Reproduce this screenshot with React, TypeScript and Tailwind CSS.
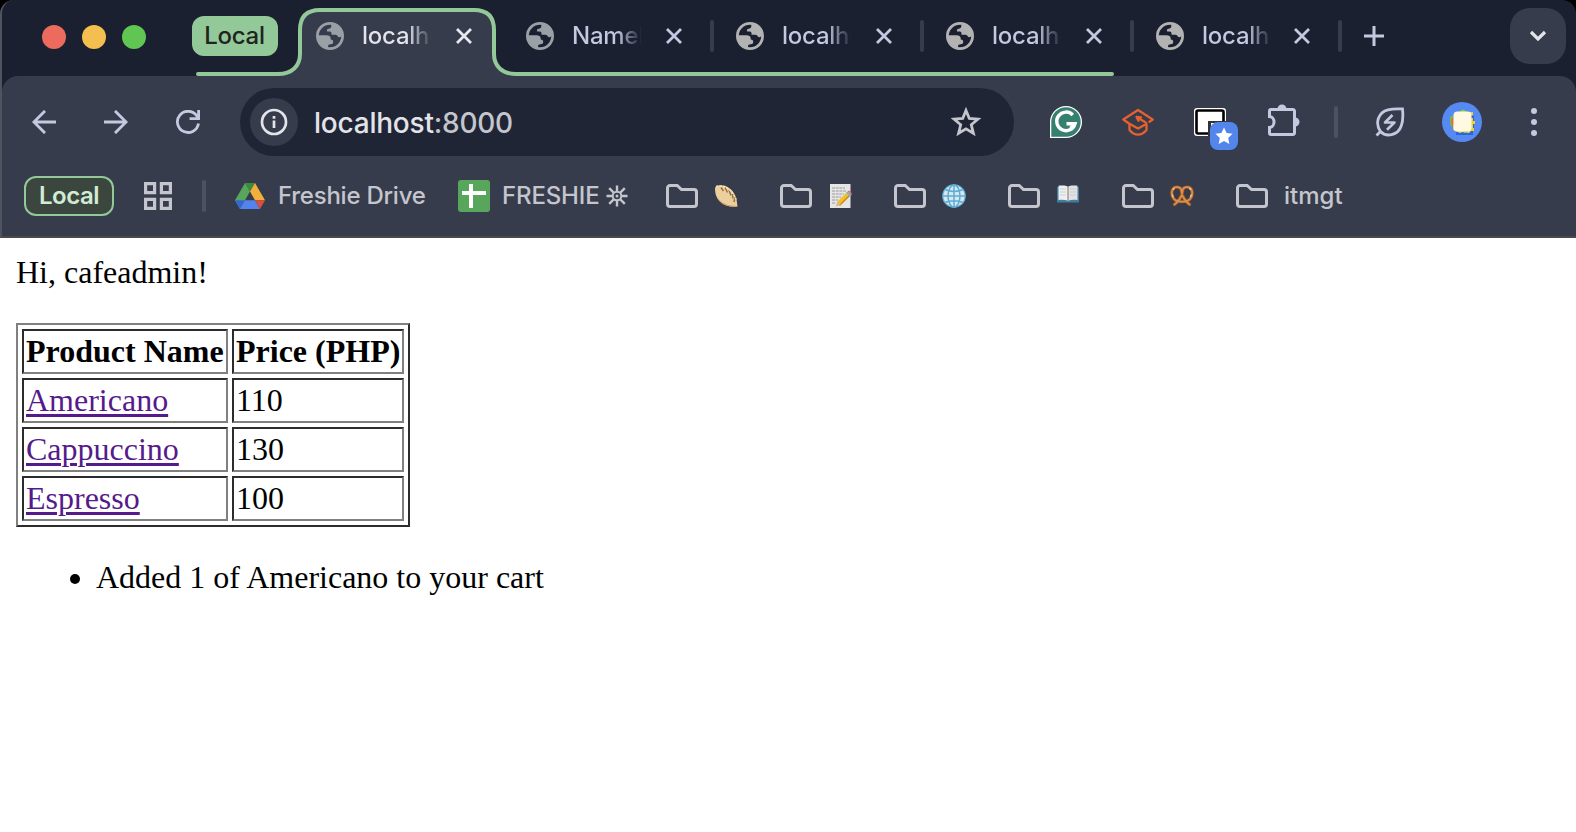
import React from "react";

function Globe({ className }: { className: string }) {
  return (
    <svg viewBox="0 0 28 28" className={"size-7 shrink-0 " + className}>
      <circle cx="14" cy="14" r="12.6" fill="none" stroke="currentColor" strokeWidth="2.8" />
      <path
        fill="currentColor"
        d="M15.300 2.200v2c0 1.500-1.200 2.200-2.600 2.500-1.700.3-2.200 1.300-1.500 2.700h2.500c1.200 0 1.800.9 1.800 2.100v1.300h4c1.300 0 1.900.8 2.300 1.700.8 1.200 2.500 1.100 3.600-.5l1-1.500C26.200 6 21 2.200 15.300 2.200z"
      />
      <path fill="currentColor" d="M2 13.200h8.500c2.500 0 4.200 1.100 4.200 3.100v1.300c1.500 0 2.500.8 2.500 2.300s-1 2.200-2.500 2.300c-1.800 0-2.700.8-2.700 2.200v2.200C6 26 1.500 20 2 13.200z" />
    </svg>
  );
}

function Close({ className }: { className: string }) {
  return (
    <svg viewBox="0 0 16 16" className={"size-4 shrink-0 " + className}>
      <path d="M1 1l14 14M15 1L1 15" stroke="currentColor" strokeWidth="2.800" fill="none" />
    </svg>
  );
}

const FADE = "bg-linear-to-r from-66% to-102% bg-clip-text text-transparent tracking-[-0.01em]";

function Tab({ title, first, last }: { title: string; first?: boolean; last?: boolean }) {
  return (
    <div className={"flex h-8 shrink-0 items-center " + (last ? "w-[208px]" : "w-[210px]")}>
      <Globe className={first ? "text-[#9aa0a6]" : "text-[#b3b3b3]"} />
      <span className={"ml-[18px] w-[69px] overflow-hidden whitespace-nowrap from-[#c3c9e0] to-[#1a202f] " + FADE}>{title}</span>
      <Close className={(last ? "ml-[23px]" : "ml-[25px]") + " text-[#c3c9e0]"} />
      <span className="ml-7 h-8 w-1 rounded-xs bg-[#363c4b]" />
    </div>
  );
}

function Folder({ children, className }: { children: React.ReactNode; className: string }) {
  return (
    <div className={"flex items-center " + className}>
      <svg viewBox="0 0 32 24" className="h-6 w-8 shrink-0">
        <path d="M4 1.500h7.200l4.300 4H28a2.500 2.500 0 0 1 2.500 2.500V20a2.500 2.500 0 0 1-2.500 2.500H4A2.500 2.500 0 0 1 1.500 20V4A2.500 2.500 0 0 1 4 1.500z" fill="none" stroke="#c5c6cd" strokeWidth="3" />
      </svg>
      {children}
    </div>
  );
}

function Dumpling() {
  return (
    <svg viewBox="0 0 24 24" className="ml-4 size-6">
      <path d="M1 4C2 1 10 0 15 4c5 3 6 8 7.500 11l1 7.500c-5 1-12 0-16.500-4S1 10 1 4z" fill="#ebd09d" />
      <path d="M2.500 11c2 6 8 9.500 14 10.500l6.500.5c-5 1.500-12 0-16-3.500-3-2-4-5-4.500-7.500z" fill="#cda061" />
      <path d="M7 3.500l2.500 3.500M11 3.500l2.500 5M15 6l2 5.500M18.500 9.500l.5 5M21 13.500l-1 4.500" stroke="#94703f" strokeWidth="1.500" fill="none" />
      <path d="M2 2.500c7-2 16 2 20 13" stroke="#f6e3ba" strokeWidth="1.500" fill="none" strokeDasharray="2.500 1" />
    </svg>
  );
}

function Memo() {
  return (
    <svg viewBox="0 0 22 24" className="ml-[18px] h-6 w-[22px]">
      <path d="M0 0h20.500v24H0z" fill="#e6e6e6" />
      <path d="M2 4h13M2 7h14M2 10h12M2 13h9M2 16h6M2 19h4" stroke="#9a9a9a" strokeWidth="1" strokeDasharray="3 .7" />
      <path d="M6 22.500l1.500-5L17 8l3.500 3.500-9.500 9z" fill="#f2c02c" />
      <path d="M9.500 21.500L20 11" stroke="#c98a17" strokeWidth="1.500" />
      <path d="M6 22.500l1.500-5 3.500 3z" fill="#d9b98a" />
      <path d="M16 9l1.500-1.500 4 3.500L20 12.500z" fill="#7db4cf" />
      <path d="M17.500 7.500c2-2 5 1 4 3.500z" fill="#e5696f" />
    </svg>
  );
}

function World() {
  return (
    <svg viewBox="0 0 24 24" className="ml-4 size-6">
      <circle cx="12" cy="12" r="11.800" fill="#62b4da" />
      <circle cx="12" cy="12" r="10.600" fill="#d7e6ef" />
      <path d="M12 .5v23M.5 12h23M3 5.500c5 2.500 13 2.500 18 0M3 18.500c5-2.500 13-2.500 18 0" stroke="#5cadd5" strokeWidth="1.500" fill="none" />
      <ellipse cx="12" cy="12" rx="6" ry="11" fill="none" stroke="#5cadd5" strokeWidth="1.500" />
    </svg>
  );
}

function Book() {
  return (
    <svg viewBox="0 0 22 18" className="mb-1 ml-[17px] h-[18px] w-[22px]">
      <path d="M0 2h22v15.500H0z" fill="#3f7ea0" />
      <path d="M1.500.8C5 .2 9 .2 11 1.800v14C8 14.500 5 14.500 1.500 15z" fill="#efefef" />
      <path d="M20.500.8C17 .2 13 .2 11 1.800v14c3-1.300 6-1.300 9.500-.8z" fill="#e2e2e2" />
      <path d="M11 1.500v15" stroke="#8b8b8b" strokeWidth="1.200" />
      <path d="M3 4h6M3 7h6M3 10h6M13 4h6M13 7h6M13 10h6" stroke="#cfcfcf" strokeWidth="1" />
    </svg>
  );
}

const PRETZEL = "M4.500 19.500C8 17 12.500 11 12.500 6.500 12.500 3 15 2 17.500 2 23 2.500 23.500 10 20 14 17 17.500 7 17.500 4 14 .5 10 1 2.500 6.500 2 9 2 11.500 3 11.500 6.500 11.500 11 16 17 19.500 19.500";

function Pretzel() {
  return (
    <svg viewBox="0 0 24 22" className="mb-px ml-4 h-[22px] w-6">
      <g fill="none" strokeLinecap="round" strokeLinejoin="round">
        <path d={PRETZEL} stroke="#a85f27" strokeWidth="3.200" />
        <path d={PRETZEL} stroke="#da9150" strokeWidth="1.500" />
        <path d="M3.500 4.500l.8-1M19.500 3.500l1 1M2.500 10l.6 1.500M20.500 11.500l.8-1.500" stroke="#f3d3a2" strokeWidth="1.200" />
      </g>
    </svg>
  );
}

function TabStrip() {
  return (
    <div className="relative flex h-[76px] w-full text-[24px]">
      <svg viewBox="0 0 1576 76" className="absolute inset-0 h-[76px] w-[1576px]">
        <path d="M278 76C292 76 300 66 300 54V30Q300 10 320 10H474Q494 10 494 30V54C494 66 502 76 516 76z" fill="#363c4b" />
        <path d="M198 74H278C292 74 300 66 300 54V30Q300 10 320 10H474Q494 10 494 30V54C494 66 502 74 516 74H1112" fill="none" stroke="#93c899" strokeWidth="4" strokeLinecap="round" />
      </svg>
      <div className="relative flex h-[72px] w-full items-center">
        <div className="mt-0.5 ml-[42px] flex gap-4">
          <span className="size-6 rounded-full bg-[#ed6a5e]" />
          <span className="size-6 rounded-full bg-[#f5bf4f]" />
          <span className="size-6 rounded-full bg-[#61c554]" />
        </div>
        <div className="ml-[46px] flex h-10 w-[86px] items-center justify-center rounded-xl bg-[#93c899] pr-px tracking-[-0.01em] text-[#1f2420]">Local</div>
        <div className="ml-[38px] flex w-[210px] shrink-0 items-center">
          <Globe className="text-[#9aa0a6]" />
          <span className={"ml-[18px] w-[69px] overflow-hidden whitespace-nowrap from-[#e3e3ea] to-[#363c4b] " + FADE}>localhost</span>
          <Close className="ml-[25px] text-[#e8e8ef]" />
        </div>
        <Tab title="NameError" first />
        <Tab title="localhost" />
        <Tab title="localhost" />
        <Tab title="localhost" last />
        <svg viewBox="0 0 20 20" className="size-5 shrink-0">
          <path d="M10 0v20M0 10h20" stroke="#c3c9e0" strokeWidth="3" />
        </svg>
        <div className="mr-2.5 ml-auto flex size-14 items-center justify-center rounded-[20px] bg-[#363c4b]">
          <svg viewBox="0 0 18 12" className="h-3 w-[18px]">
            <path d="M2 2l7 7 7-7" fill="none" stroke="#e3e3ea" strokeWidth="3.200" />
          </svg>
        </div>
      </div>
    </div>
  );
}

function Toolbar() {
  return (
    <div className="flex h-[92px] items-center text-[#c3c9e0]">
      <svg viewBox="0 0 24 24" className="ml-8 size-6">
        <path d="M24 12H2M13 .9L1.900 12 13 23.100" fill="none" stroke="currentColor" strokeWidth="2.800" />
      </svg>
      <svg viewBox="0 0 24 24" className="ml-12 size-6">
        <path d="M0 12h22M11 .9L22.100 12 11 23.100" fill="none" stroke="currentColor" strokeWidth="2.800" />
      </svg>
      <svg viewBox="0 0 24 24" className="ml-12 size-6">
        <path d="M22.500 13.500A10.600 10.600 0 1 1 20.500 5.500l2 3M22.600 0v8.700h-9" fill="none" stroke="currentColor" strokeWidth="2.800" />
      </svg>
      <div className="ml-10 flex h-[68px] w-[774px] items-center rounded-full bg-[#1f2534]">
        <span className="ml-2.5 flex size-12 items-center justify-center rounded-full bg-[#363c4b]">
          <svg viewBox="0 0 28 28" className="size-7">
            <circle cx="14" cy="14" r="12" fill="none" stroke="#e3e3ea" strokeWidth="2.700" />
            <path d="M14 12.600v7.400M14 8v2.800" stroke="#e3e3ea" strokeWidth="2.700" />
          </svg>
        </span>
        <span className="mt-px ml-4 text-[28px] tracking-[-0.008em] text-[#e3e3ea]">
          localhost<span className="text-[#c5c6cd]">:8000</span>
        </span>
        <svg viewBox="0 0 32 32" className="mr-8 ml-auto size-8">
          <path d="M16 4.500l3.300 8 8.600.7-6.600 5.600 2.100 8.500L16 22.800l-7.400 4.500 2.100-8.500-6.600-5.600 8.600-.7z" fill="none" stroke="#c5c6cd" strokeWidth="2.800" />
        </svg>
      </div>
      <svg viewBox="0 0 32 32" className="ml-9 size-8">
        <path d="M0 32V16A16 16 0 1 1 16 32z" fill="#fff" />
        <path d="M1.300 30.700V16A14.700 14.700 0 1 1 16 30.700z" fill="#35806f" />
        <path d="M22.800 9A9.300 9.300 0 1 0 25 17.800H16.500M25 17.800l-4.500 4.500" fill="none" stroke="#fff" strokeWidth="3.400" />
      </svg>
      <svg viewBox="0 0 32 28" className="ml-10 h-7 w-8" fill="none" stroke="#e8602c" strokeWidth="2.300" strokeLinejoin="round" strokeLinecap="round">
        <path d="M27.500 13.800l3.200-2.300L16 2 1.300 11.500l5.700 4L16 20.500l7.500-4" />
        <path d="M7.500 16v6c2 2.500 5 4.700 8.500 4.700 3.500 0 6.500-2.200 8.500-4.700v-5.500c0-1-.5-2-1.500-2.500L14.500 9l4.500.3M14.500 9l2 3.800" />
      </svg>
      <div className="relative ml-10 h-7 w-8">
        <svg viewBox="0 0 32 28" className="h-7 w-8">
          <rect x="0" y="0" width="32" height="28" rx="3" fill="#fff" />
          <rect x="2.500" y="2.500" width="27" height="23" rx="1.500" fill="#fff" stroke="#000" strokeWidth="2.600" />
          <path d="M14 13h18v2H14z" fill="#333" />
          <path d="M14 13h3v15h-3z" fill="#333" />
        </svg>
        <span className="absolute top-3.5 left-4 flex size-7 items-center justify-center rounded-lg bg-[#5385ec]">
          <svg viewBox="0 0 20 20" className="size-[18px]">
            <path d="M10 .5l2.900 6.300 6.600.8-4.900 4.600 1.400 6.800-6-3.400L4 19l1.400-6.800L.5 7.600l6.600-.8z" fill="#fff" />
          </svg>
        </span>
      </div>
      <svg viewBox="0 0 32 32" className="mb-1 ml-[42px] size-8">
        <path d="M3.500 5.500H25A1.500 1.500 0 0 1 26.500 7v22a1.500 1.500 0 0 1-1.500 1.500H3A1.500 1.500 0 0 1 1.500 29v-5.500c6-.5 6-10.500 0-11V7A1.500 1.500 0 0 1 3 5.500z" fill="none" stroke="currentColor" strokeWidth="3" />
        <path d="M9.500 5a4.500 4.500 0 0 1 9 0zM27 13.500a4.500 4.500 0 0 1 0 9z" fill="currentColor" />
      </svg>
      <span className="ml-[34px] h-8 w-1 rounded-xs bg-[#4c5263]" />
      <svg viewBox="0 0 30 30" className="ml-[37px] size-[30px]" fill="none" stroke="currentColor" strokeWidth="2.800">
        <path d="M5.500 24.500C-.5 16 3.500 5 13 2.800c5-1.200 10-.8 14.500-.8.5 5 .7 12-1.300 17C23 28.500 11 30.500 5.500 24.500zM5.500 24.500L1.500 28.500" />
        <path d="M17.500 8L10 15.500H19.500L12 22.800" strokeWidth="2.600" strokeLinejoin="round" />
      </svg>
      <svg viewBox="0 0 40 40" className="ml-[37px] size-10">
        <circle cx="20" cy="20" r="20" fill="#568af2" />
        <path d="M14 27h17v6H14z" fill="#2e63e8" />
        <path d="M29 14h3v14h-3z" fill="#2e63e8" />
        <path d="M8 15l3-2v12l-3-2z" fill="#6fbf3f" />
        <path d="M9.500 17l3-2v10l-3-2z" fill="#e5694f" />
        <path d="M13 10h18v3h-2v3h2v3h2v3h-2v4h1v3h-3l-2 2h-4l-2-1-3 1-7-3z" fill="#f1d22d" />
        <path d="M18 9l3-1.500L24 9v2h-6zM22 28h5l-2 3h-2z" fill="#78d63c" />
        <rect x="11.500" y="9.500" width="18" height="20" rx="4" fill="#fff8e3" />
      </svg>
      <svg viewBox="0 0 6 28" className="ml-[49px] h-7 w-1.5 shrink-0" fill="currentColor">
        <circle cx="3" cy="3" r="3" />
        <circle cx="3" cy="14" r="3" />
        <circle cx="3" cy="25" r="3" />
      </svg>
    </div>
  );
}

function Bookmarks() {
  return (
    <div className="flex h-[56px] items-center text-[24px] text-[#c5c6cd]">
      <div className="ml-6 flex h-10 w-[90px] items-center justify-center rounded-xl border-2 border-[#93c899] bg-[#3b473e] font-semibold tracking-[-0.02em] text-[#d3ead6]">Local</div>
      <svg viewBox="0 0 28 28" className="ml-[30px] size-7" fill="none" stroke="currentColor" strokeWidth="3.200">
        <path d="M1.600 1.600h9v9h-9zM17.400 1.600h9v9h-9zM1.600 17.400h9v9h-9zM17.400 17.400h9v9h-9z" />
      </svg>
      <span className="ml-[30px] h-8 w-1 rounded-xs bg-[#4c5263]" />
      <svg viewBox="0 0 30 26" className="ml-[29px] h-[26px] w-[30px]">
        <path d="M10 0h10l-5 8.500z" fill="#388e3c" />
        <path d="M10 0l5 8.500L5 26 0 17.300z" fill="#58a55c" />
        <path d="M20 0l10 17.300H20L15 8.500z" fill="#f1b03c" />
        <path d="M0 17.300h10L5 26z" fill="#3367d6" />
        <path d="M10 17.300h10L25 26H5z" fill="#5383ec" />
        <path d="M20 17.300h10L25 26z" fill="#d95040" />
      </svg>
      <span className="ml-[13px] w-[148px] whitespace-nowrap tracking-[-0.01em]">Freshie Drive</span>
      <svg viewBox="0 0 32 32" className="ml-8 size-8">
        <rect width="32" height="32" rx="3" fill="#58a65b" />
        <path d="M13 4v24M4 13h24" stroke="#fff" strokeWidth="4" />
      </svg>
      <span className="ml-3 flex w-[126px] items-center justify-between whitespace-nowrap">
        <span className="tracking-[-0.006em]">FRESHIE</span>
        <svg viewBox="0 0 22 22" className="size-[22px]" fill="none" stroke="currentColor">
          <circle cx="11" cy="11" r="4.300" strokeWidth="2" />
          <circle cx="11" cy="11" r="1.500" fill="currentColor" stroke="none" />
          <path d="M11 .5v6M11 15.500v6M.5 11h6M15.500 11h6M3.200 3.200l4.500 4.500M14.300 14.300l4.500 4.500M18.800 3.200l-4.500 4.500M7.700 14.300l-4.500 4.500" strokeWidth="2.400" />
        </svg>
      </span>
      <Folder className="ml-[38px] w-[114px]"><Dumpling /></Folder>
      <Folder className="w-[114px]"><Memo /></Folder>
      <Folder className="w-[114px]"><World /></Folder>
      <Folder className="w-[114px]"><Book /></Folder>
      <Folder className="w-[114px]"><Pretzel /></Folder>
      <Folder className="w-[114px]"><span className="ml-4">itmgt</span></Folder>
    </div>
  );
}

const PRODUCTS = [
  { name: "Americano", price: 110 },
  { name: "Cappuccino", price: 130 },
  { name: "Espresso", price: 100 },
];

const CELL = "h-[45px] border-2 border-t-[#2c2c2c] border-l-[#2c2c2c] border-r-[#808080] border-b-[#808080] px-0.5 py-0 whitespace-nowrap";

export default function App() {
  return (
    <div className="h-[832px] w-[1576px] overflow-hidden bg-white">
      <header className="h-[238px] overflow-hidden bg-black font-['Inter',sans-serif] font-[450]">
        <div className="h-[238px] overflow-hidden rounded-t-[14px] border-b-2 border-l-2 border-b-[#4a4a4e] border-l-[#50545f] bg-[#1a202f]">
          <div className="-ml-0.5">
            <TabStrip />
          </div>
          <div className="h-[160px] rounded-t-2xl bg-[#363c4b]">
            <div className="-ml-0.5">
              <Toolbar />
              <Bookmarks />
            </div>
          </div>
        </div>
      </header>
      <main className="px-4 pt-4 font-['Liberation_Serif',serif] text-[32px] leading-[37px] text-black">
        <p>Hi, cafeadmin!</p>
        <table className="mt-8 w-[394px] table-fixed border-separate border-spacing-1 border-2 border-t-[#808080] border-r-[#2c2c2c] border-b-[#2c2c2c] border-l-[#808080]">
          <thead>
            <tr>
              <th className={"w-[206px] text-left font-bold " + CELL}>Product Name</th>
              <th className={"w-[172px] text-left font-bold " + CELL}>Price (PHP)</th>
            </tr>
          </thead>
          <tbody>
            {PRODUCTS.map((p) => (
              <tr key={p.name}>
                <td className={CELL}>
                  <a className="text-[#551a8b] underline decoration-[3px] underline-offset-[3px]">{p.name}</a>
                </td>
                <td className={CELL}>{p.price}</td>
              </tr>
            ))}
          </tbody>
        </table>
        <ul className="mt-8 flex items-center pl-[54px]">
          <li className="flex items-center">
            <span className="mt-[3px] mr-4 size-2.5 rounded-full bg-black" />
            Added 1 of Americano to your cart
          </li>
        </ul>
      </main>
    </div>
  );
}
